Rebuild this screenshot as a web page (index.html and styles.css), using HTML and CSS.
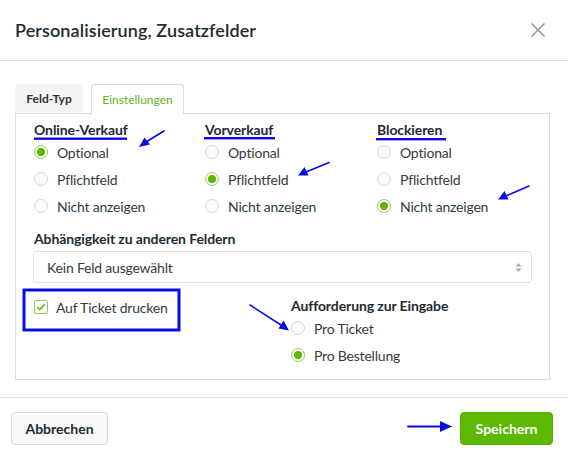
FILE: index.html
```html
<!DOCTYPE html>
<html lang="de">
<head>
<meta charset="utf-8">
<title>Personalisierung, Zusatzfelder</title>
<link rel="stylesheet" href="styles.css">
</head>
<body>
<div class="modal">
  <header class="modal-header">
    <h1 class="modal-title">Personalisierung, Zusatzfelder</h1>
    <button class="close" aria-label="Schließen">
      <svg width="16" height="16" viewBox="0 0 16 16"><path d="M1.5 1.5 L14.5 14.5 M14.5 1.5 L1.5 14.5" stroke="#8d99a6" stroke-width="1.6" fill="none"/></svg>
    </button>
  </header>

  <div class="modal-body">
    <div class="tabs">
      <div class="tab">Feld-Typ</div>
      <div class="tab active">Einstellungen</div>
    </div>
    <div class="panel">
      <div class="cols3">
        <div class="group">
          <div class="group-title">Online-Verkauf</div>
          <label class="radio"><span class="dot checked"></span>Optional</label>
          <label class="radio"><span class="dot"></span>Pflichtfeld</label>
          <label class="radio"><span class="dot"></span>Nicht anzeigen</label>
        </div>
        <div class="group">
          <div class="group-title">Vorverkauf</div>
          <label class="radio"><span class="dot"></span>Optional</label>
          <label class="radio"><span class="dot checked"></span>Pflichtfeld</label>
          <label class="radio"><span class="dot"></span>Nicht anzeigen</label>
        </div>
        <div class="group">
          <div class="group-title">Blockieren</div>
          <label class="radio"><span class="dot"></span>Optional</label>
          <label class="radio"><span class="dot"></span>Pflichtfeld</label>
          <label class="radio"><span class="dot checked"></span>Nicht anzeigen</label>
        </div>
      </div>

      <div class="field">
        <div class="field-label">Abhängigkeit zu anderen Feldern</div>
        <div class="select">
          <span>Kein Feld ausgewählt</span>
          <svg class="caret" width="7" height="11" viewBox="0 0 7 11"><path d="M3.5 1 L6.5 4.5 H0.5 Z M3.5 10 L6.5 6.5 H0.5 Z" fill="#a7b0ba"/></svg>
        </div>
      </div>

      <div class="cols2">
        <div class="check-col">
          <label class="checkbox">
            <span class="box"><svg width="10" height="8" viewBox="0 0 10 8"><path d="M1.2 4 L3.8 6.5 L8.8 1.3" stroke="#5cb800" stroke-width="1.6" fill="none"/></svg></span>
            Auf Ticket drucken
          </label>
        </div>
        <div class="group">
          <div class="group-title">Aufforderung zur Eingabe</div>
          <label class="radio"><span class="dot"></span>Pro Ticket</label>
          <label class="radio"><span class="dot checked"></span>Pro Bestellung</label>
        </div>
      </div>
    </div>
  </div>

  <footer class="modal-footer">
    <button class="btn btn-default">Abbrechen</button>
    <button class="btn btn-primary">Speichern</button>
  </footer>
</div>

<svg class="annotations" width="568" height="456" viewBox="0 0 568 456">
  <g fill="#0a0ae6" stroke="#0a0ae6">
    <rect x="34" y="137.5" width="93" height="2.4" stroke="none"/>
    <rect x="204" y="137" width="71" height="2.4" stroke="none"/>
    <rect x="376" y="138" width="70" height="2.4" stroke="none"/>
    <rect x="24" y="290" width="155" height="40" fill="none" stroke-width="3"/>
  </g>
  <g fill="#0a0ae6" stroke="#0a0ae6" stroke-linecap="round">
    <line x1="164" y1="131" x2="146" y2="142" stroke-width="1.6"/>
    <path d="M139 147 L144.5 137.5 L150 144.5 Z" stroke="none"/>
    <line x1="329" y1="162.5" x2="306" y2="172" stroke-width="1.6"/>
    <path d="M298 175.5 L304.5 167 L308.5 175.5 Z" stroke="none"/>
    <line x1="529" y1="186" x2="506" y2="196" stroke-width="1.6"/>
    <path d="M498 199.5 L504.5 191 L508.5 199.5 Z" stroke="none"/>
    <line x1="250" y1="305" x2="281" y2="325" stroke-width="1.6"/>
    <path d="M289 330.5 L278.5 328.5 L283.5 320.5 Z" stroke="none"/>
    <line x1="408" y1="426.5" x2="442" y2="426.5" stroke-width="2"/>
    <path d="M452 426.5 L440 421 L440 432 Z" stroke="none"/>
  </g>
</svg>
</body>
</html>
```
FILE: styles.css
```css
* { box-sizing: border-box; }
html, body { margin: 0; padding: 0; background: #fff; }
body {
  width: 568px;
  height: 456px;
  position: relative;
  overflow: hidden;
  font-family: "Lato", "Liberation Sans", sans-serif;
  color: #2b333b;
}
.modal { width: 568px; }
.modal-header {
  height: 61px;
  display: flex;
  align-items: center;
  justify-content: space-between;
  padding: 0 22px 0 15px;
  border-bottom: 1px solid #dde2e7;
}
.modal-title {
  margin: 0;
  font-size: 18px;
  font-weight: 600;
  color: #222a31;
  letter-spacing: 0.1px;
}
.close {
  border: 0;
  background: none;
  padding: 0;
  width: 16px;
  height: 16px;
  display: flex;
}
.modal-body {
  padding: 23px 18px 17px 15px;
}
.tabs {
  display: flex;
  gap: 8px;
  height: 29px;
}
.tab {
  width: 68px;
  display: flex;
  align-items: center;
  justify-content: center;
  font-size: 12px;
  font-weight: 700;
  color: #2b333b;
  background: #f3f4f6;
  border-radius: 3px 3px 0 0;
}
.tab.active {
  width: 93px;
  background: #fff;
  color: #62b51a;
  font-weight: 400;
  border: 1px solid #d8dde3;
  border-bottom: 0;
  position: relative;
  z-index: 1;
  margin-bottom: -1px;
  height: 30px;
}
.panel {
  border: 1px solid #d8dde3;
  padding: 7px 17px 9px 18px;
  height: 267px;
}
.cols3 {
  display: grid;
  grid-template-columns: 171px 172px 1fr;
}
.group-title {
  font-size: 14px;
  font-weight: 700;
  line-height: 18px;
  color: #222a31;
  letter-spacing: -0.1px;
}
.radio {
  display: flex;
  align-items: center;
  height: 27px;
  padding-bottom: 1px;
  font-size: 14px;
  letter-spacing: -0.2px;
  color: #333b43;
}
.dot {
  width: 14px;
  height: 14px;
  border-radius: 50%;
  border: 1px solid #d3d9df;
  background: #fbfbfc;
  margin-right: 9px;
  flex: none;
  display: flex;
  align-items: center;
  justify-content: center;
}
.dot.checked {
  border-color: #92d05a;
  background: #fff;
}
.dot.checked::after {
  content: "";
  width: 8px;
  height: 8px;
  border-radius: 50%;
  background: #5cb800;
}
.field { margin-top: 10px; }
.field-label {
  font-size: 14px;
  font-weight: 700;
  line-height: 18px;
  color: #222a31;
  letter-spacing: -0.1px;
}
.select {
  margin-top: 3px;
  margin-left: -1px;
  height: 32px;
  border: 1px solid #dfe3e8;
  border-radius: 3px;
  display: flex;
  align-items: center;
  justify-content: space-between;
  padding: 0 9px 0 13px;
  font-size: 14px;
  letter-spacing: -0.2px;
  color: #333b43;
  background: #fff;
}
.cols2 {
  margin-top: 14px;
  display: grid;
  grid-template-columns: 257px 1fr;
}
.checkbox {
  display: flex;
  align-items: center;
  height: 18px;
  font-size: 14px;
  letter-spacing: -0.2px;
  color: #333b43;
  margin-top: 1px;
}
.box {
  width: 14px;
  height: 14px;
  border: 1px solid #8fcf55;
  border-radius: 2px;
  margin-right: 8px;
  display: flex;
  align-items: center;
  justify-content: center;
}
.modal-footer {
  border-top: 1px solid #dde2e7;
  display: flex;
  justify-content: space-between;
  padding: 14px 15px 0 11px;
}
.btn {
  height: 33px;
  border-radius: 4px;
  font-family: inherit;
  font-size: 14px;
  font-weight: 700;
  padding: 0;
}
.btn-default {
  width: 97px;
  background: #f8f9fa;
  border: 1px solid #d6dbe1;
  color: #222a31;
}
.btn-primary {
  width: 93px;
  background: #5cb800;
  border: 1px solid #56ad00;
  color: #fff;
}
.annotations {
  position: absolute;
  left: 0;
  top: 0;
  pointer-events: none;
}
```
